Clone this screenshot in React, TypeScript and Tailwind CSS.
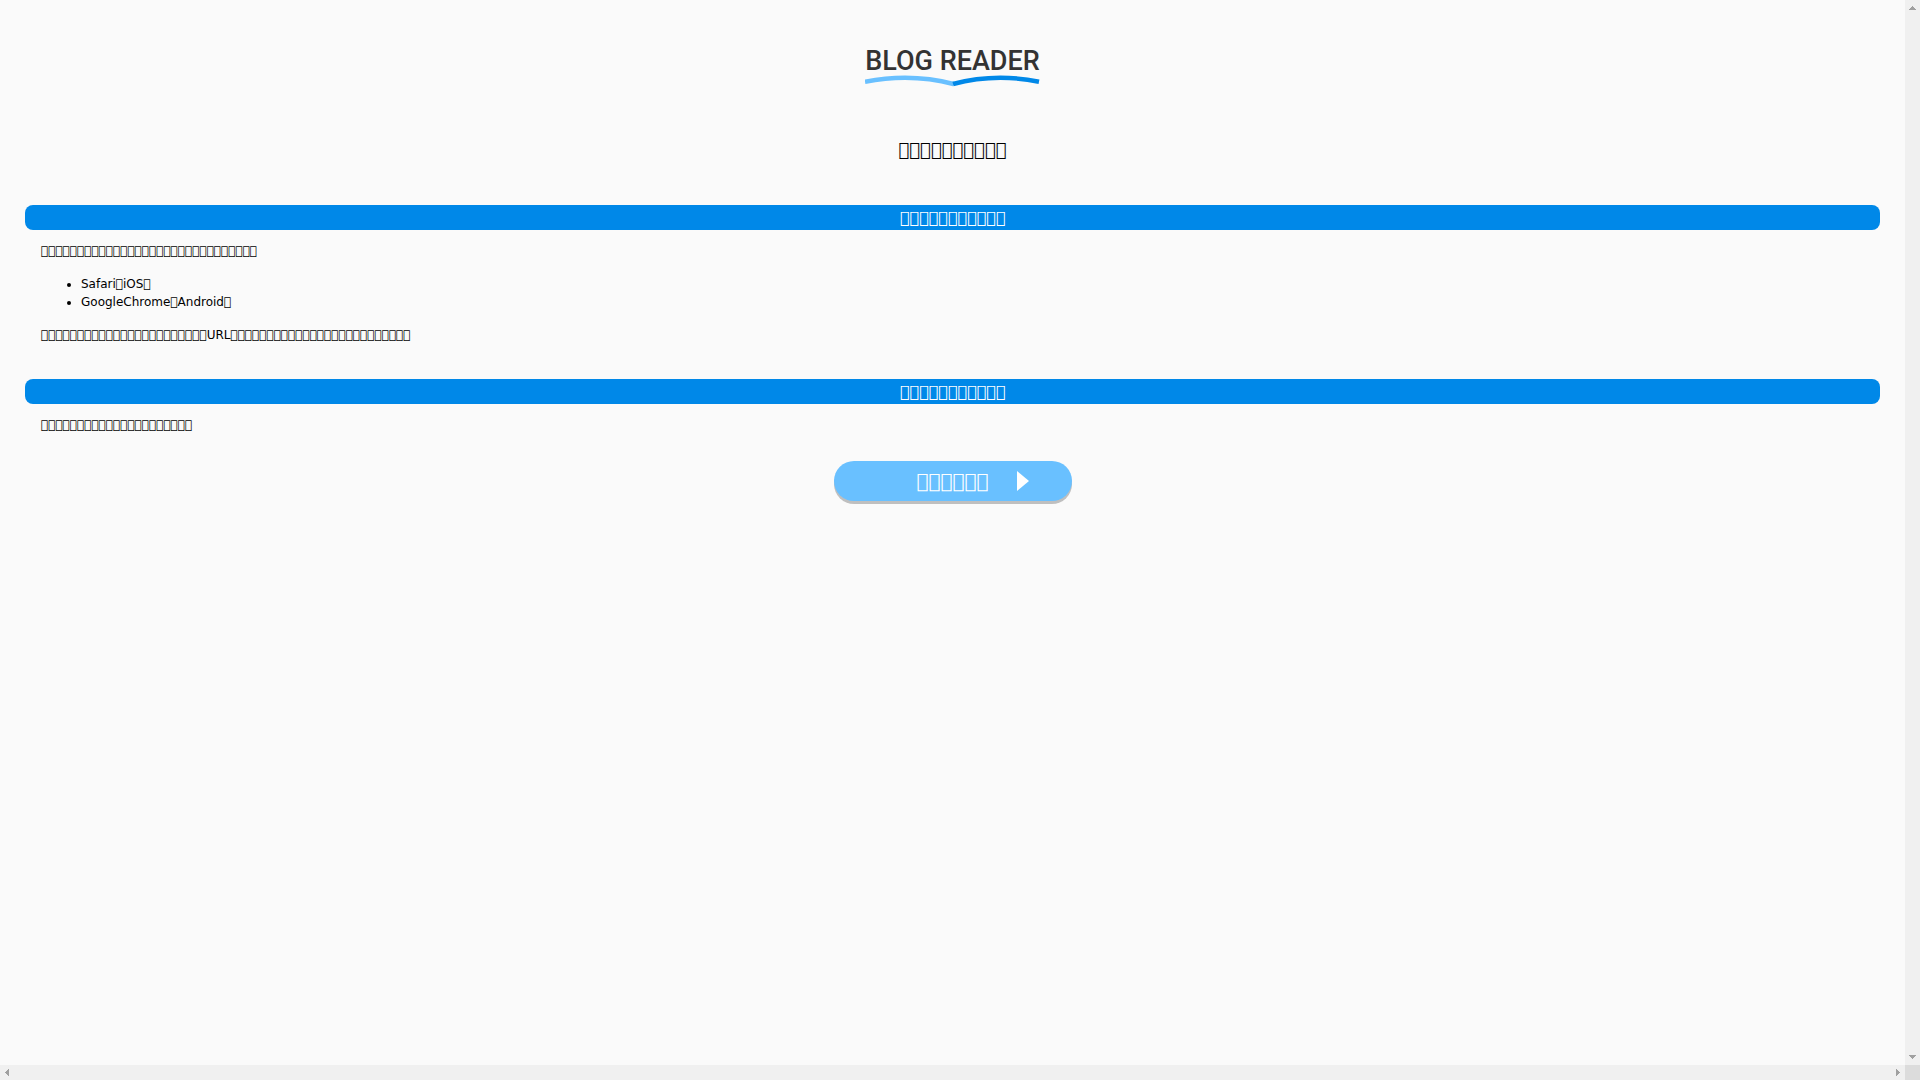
import type { ReactNode } from "react";

const glyphs = (count: number) => "\uE0F0".repeat(count);

function Logo() {
  return (
    <div className="flex w-44 flex-col items-center">
      <span className="font-['Roboto',sans-serif] text-[27px] leading-7 font-medium whitespace-nowrap text-[#333]">
        BLOG READER
      </span>
      <svg className="h-3 w-44" viewBox="0 0 176 12" fill="none" strokeWidth="4.500" aria-hidden="true">
        <path d="M0 6.700Q46-2.200 88.500 9" stroke="#69c0ff" />
        <path d="M88 9Q130-2.200 174 6.700" stroke="#0088e8" />
      </svg>
    </div>
  );
}

function Section({ title, children }: { title: string; children: ReactNode }) {
  return (
    <section>
      <h2 className="h-[25px] rounded-lg bg-[#0088e8] text-center text-base leading-[25px] text-white">{title}</h2>
      <div className="flex flex-col gap-[15px] px-4 pt-3">{children}</div>
    </section>
  );
}

function Arrow({ d, label }: { d: string; label: string }) {
  return (
    <button type="button" aria-label={label} className="flex size-[15px] items-center justify-center">
      <svg className="size-[15px]" viewBox="0 0 15 15" fill="#a0a0a0" shapeRendering="crispEdges" aria-hidden="true">
        <path d={d} />
      </svg>
    </button>
  );
}

export default function App() {
  return (
    <div className="grid h-screen grid-cols-[minmax(0,1fr)_15px] grid-rows-[minmax(0,1fr)_15px] bg-[#fafafa] font-['DejaVu_Sans',sans-serif] text-xs leading-[18px] text-black">
      <div className="overflow-hidden px-[25px] pt-[47px]">
        <header className="flex flex-col items-center">
          <Logo />
          <h1 className="mt-[49px] mb-[42px] text-lg leading-[27px]">{glyphs(10)}</h1>
        </header>
        <main>
          <div className="flex flex-col gap-[35px]">
            <Section title={glyphs(11)}>
              <p>{glyphs(30)}</p>
              <ul className="list-disc pl-10">
                <li>Safari{glyphs(1)}iOS{glyphs(1)}</li>
                <li>GoogleChrome{glyphs(1)}Android{glyphs(1)}</li>
              </ul>
              <p>{glyphs(23)}URL{glyphs(25)}</p>
            </Section>
            <Section title={glyphs(11)}>
              <p>{glyphs(21)}</p>
            </Section>
          </div>
          <button
            type="button"
            className="relative mx-auto mt-[27px] block h-10 w-[238px] rounded-[20px] bg-[#69c0ff] text-center text-xl leading-10 text-white shadow-[0_3px_0_#bfbfbf]"
          >
            {glyphs(6)}
            <svg className="absolute top-2.5 right-[43px] h-5 w-3" viewBox="0 0 12 20" fill="#fff" aria-hidden="true">
              <path d="M0 0 12 10 0 20Z" />
            </svg>
          </button>
        </main>
      </div>
      <div className="flex flex-col justify-between bg-[#f0f0f0]">
        <Arrow label="Scroll up" d="M7 6h1v1h1v1h1v1h1v1H4V9h1V8h1V7h1Z" />
        <Arrow label="Scroll down" d="M4 5h7v1h-1v1H9v1H8v1H7V8H6V7H5V6H4Z" />
      </div>
      <div className="flex justify-between bg-[#f0f0f0]">
        <Arrow label="Scroll left" d="M9 4v7H8v-1H7V9H6V8H5V7h1V6h1V5h1V4Z" />
        <Arrow label="Scroll right" d="M6 4v7h1v-1h1V9h1V8h1V7H9V6H8V5H7V4Z" />
      </div>
      <div className="bg-[#dcdcdc]" />
    </div>
  );
}
